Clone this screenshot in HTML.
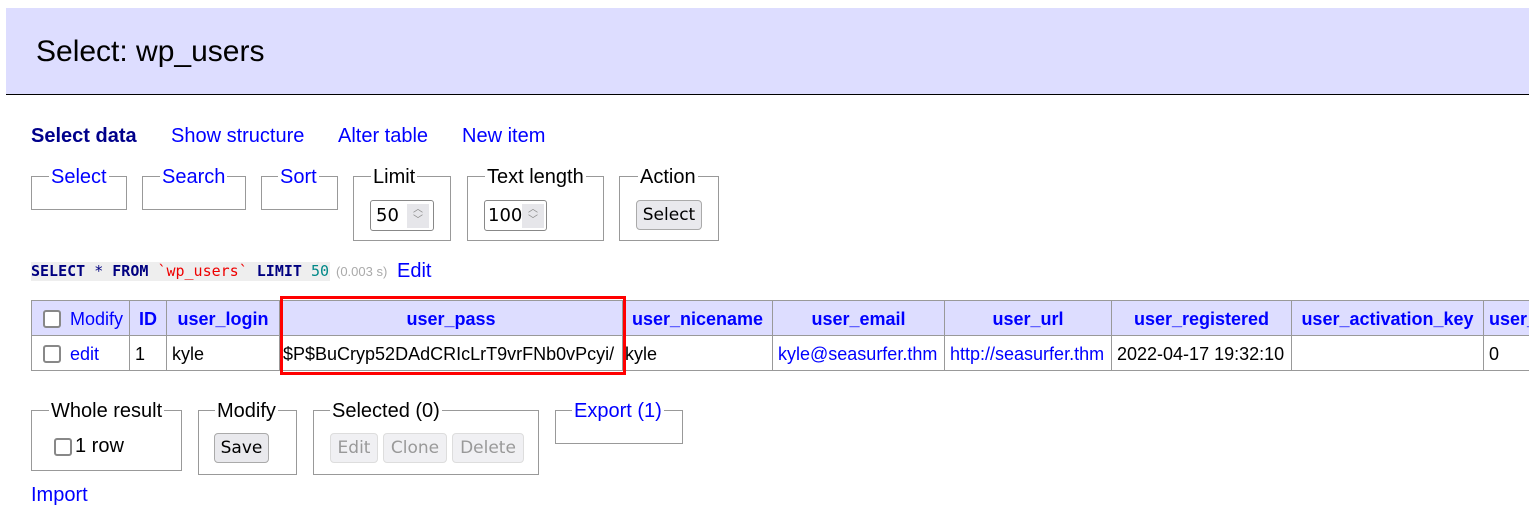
<!DOCTYPE html>
<html><head><meta charset="utf-8"><style>
*{box-sizing:border-box;margin:0;padding:0}
body{width:1529px;height:492px;overflow:hidden;background:#fff;font-family:"Liberation Sans","DejaVu Sans",sans-serif;font-size:19.5px;color:#000;position:relative}
.a{position:absolute;white-space:nowrap}
.b{color:#00f}
.fs{position:absolute;border:1px solid #999}
.lg{position:absolute;top:-11px;background:#fff;padding:0 2px;font-size:20px;line-height:22px}
.btn{position:absolute;border:1px solid #aaa;border-radius:4px;background:#e9e9ed;font-family:"DejaVu Sans",sans-serif;font-size:17px;text-align:center;line-height:28px;height:30px}
.dis{color:#999;background:#f0f0f3;border-color:#ddd}
.inp{position:absolute;border:1px solid #888;border-radius:3px;background:#fff;height:31px;font-family:"DejaVu Sans",sans-serif;font-size:18px;line-height:29px;padding-left:5px;overflow:hidden}
.sp{position:absolute;right:4px;top:3px;width:22px;height:24px;background:#e6e6ea;color:#888;font-size:10px;line-height:11px;text-align:center}
.cb{position:absolute;width:18px;height:18px;border:2px solid #888;border-radius:3px;background:#fff}
table{position:absolute;left:31px;top:300px;border-collapse:collapse;table-layout:fixed;width:1529px;font-size:18px}
td,th{border:1px solid #999;padding:2px 5px 0;height:35px;white-space:nowrap;overflow:hidden}
th{background:#ddf;color:#00f;font-weight:bold;text-align:center}
</style></head><body>
<div class="a" style="left:6px;top:8px;width:1523px;height:87px;background:#ddf;border-bottom:1px solid #000"></div>
<div class="a" style="left:36px;top:35px;font-size:30px">Select: wp_users</div>
<div class="a" style="left:31px;top:125px;font-weight:bold;color:#00008b;font-size:20px">Select data</div>
<div class="a b" style="left:171px;top:125px;font-size:20px">Show structure</div>
<div class="a b" style="left:338px;top:125px;font-size:20px">Alter table</div>
<div class="a b" style="left:462px;top:125px;font-size:20px">New item</div>

<div class="fs" style="left:31px;top:176px;width:96px;height:34px"><span class="lg b" style="left:17px">Select</span></div>
<div class="fs" style="left:142px;top:176px;width:104px;height:34px"><span class="lg b" style="left:17px">Search</span></div>
<div class="fs" style="left:261px;top:176px;width:77px;height:34px"><span class="lg b" style="left:16px">Sort</span></div>
<div class="fs" style="left:353px;top:176px;width:98px;height:65px"><span class="lg" style="left:17px">Limit</span>
<div class="inp" style="left:16px;top:23px;width:64px">50<div class="sp">︿<br>﹀</div></div></div>
<div class="fs" style="left:467px;top:176px;width:137px;height:65px"><span class="lg" style="left:17px">Text length</span>
<div class="inp" style="left:16px;top:23px;width:63px;padding-left:3px">100<div class="sp" style="right:2px;top:3px">︿<br>﹀</div></div></div>
<div class="fs" style="left:619px;top:176px;width:100px;height:65px"><span class="lg" style="left:18px">Action</span>
<div class="btn" style="left:16px;top:23px;width:66px">Select</div></div>

<div class="a" style="left:31px;top:262px;height:19px;width:299px;background:#eee"></div>
<div class="a" style="left:31px;top:262px;font-family:'DejaVu Sans Mono','Liberation Mono',monospace;font-size:15px;line-height:19px;color:#000080"><b>SELECT</b> * <b>FROM</b> <span style="color:#e00">`wp_users`</span> <b>LIMIT</b> <span style="color:#088">50</span></div>
<div class="a" style="left:336px;top:264px;color:#aaa;font-size:13px">(0.003 s)</div>
<div class="a b" style="left:397px;top:260px;font-size:20px">Edit</div>

<table>
<colgroup><col style="width:98px"><col style="width:37px"><col style="width:113px"><col style="width:343px"><col style="width:150px"><col style="width:172px"><col style="width:167px"><col style="width:180px"><col style="width:192px"><col style="width:77px"></colgroup>
<tr><th style="text-align:left;font-weight:normal;padding-left:38px;position:relative"><span class="cb" style="left:11px;top:9px"></span>Modify</th><th>ID</th><th>user_login</th><th>user_pass</th><th>user_nicename</th><th>user_email</th><th>user_url</th><th>user_registered</th><th>user_activation_key</th><th style="text-align:left">user_status</th></tr>
<tr><td style="padding-left:38px;position:relative" class="b"><span class="cb" style="left:11px;top:9px"></span>edit</td><td>1</td><td>kyle</td><td style="padding:2px 2px 0 3px">$P$BuCryp52DAdCRIcLrT9vrFNb0vPcyi/</td><td style="padding:2px 2px 0">kyle</td><td class="b">kyle@seasurfer.thm</td><td class="b">http://seasurfer.thm</td><td>2022-04-17 19:32:10</td><td></td><td>0</td></tr>
</table>
<div class="a" style="left:280px;top:296px;width:346px;height:79px;border:3px solid #f00"></div>

<div class="fs" style="left:31px;top:410px;width:151px;height:61px"><span class="lg" style="left:17px">Whole result</span>
<span class="cb" style="left:22px;top:27px"></span><span class="a" style="left:43px;top:24px;font-size:20px">1 row</span></div>
<div class="fs" style="left:198px;top:410px;width:99px;height:65px"><span class="lg" style="left:16px">Modify</span>
<div class="btn" style="left:15px;top:22px;width:55px">Save</div></div>
<div class="fs" style="left:313px;top:410px;width:226px;height:65px"><span class="lg" style="left:16px">Selected (0)</span>
<div class="btn dis" style="left:16px;top:22px;width:48px">Edit</div>
<div class="btn dis" style="left:69px;top:22px;width:64px">Clone</div>
<div class="btn dis" style="left:138px;top:22px;width:72px">Delete</div></div>
<div class="fs" style="left:555px;top:410px;width:128px;height:34px"><span class="lg b" style="left:16px">Export (1)</span></div>
<div class="a b" style="left:31px;top:484px;font-size:20px">Import</div>
</body></html>
